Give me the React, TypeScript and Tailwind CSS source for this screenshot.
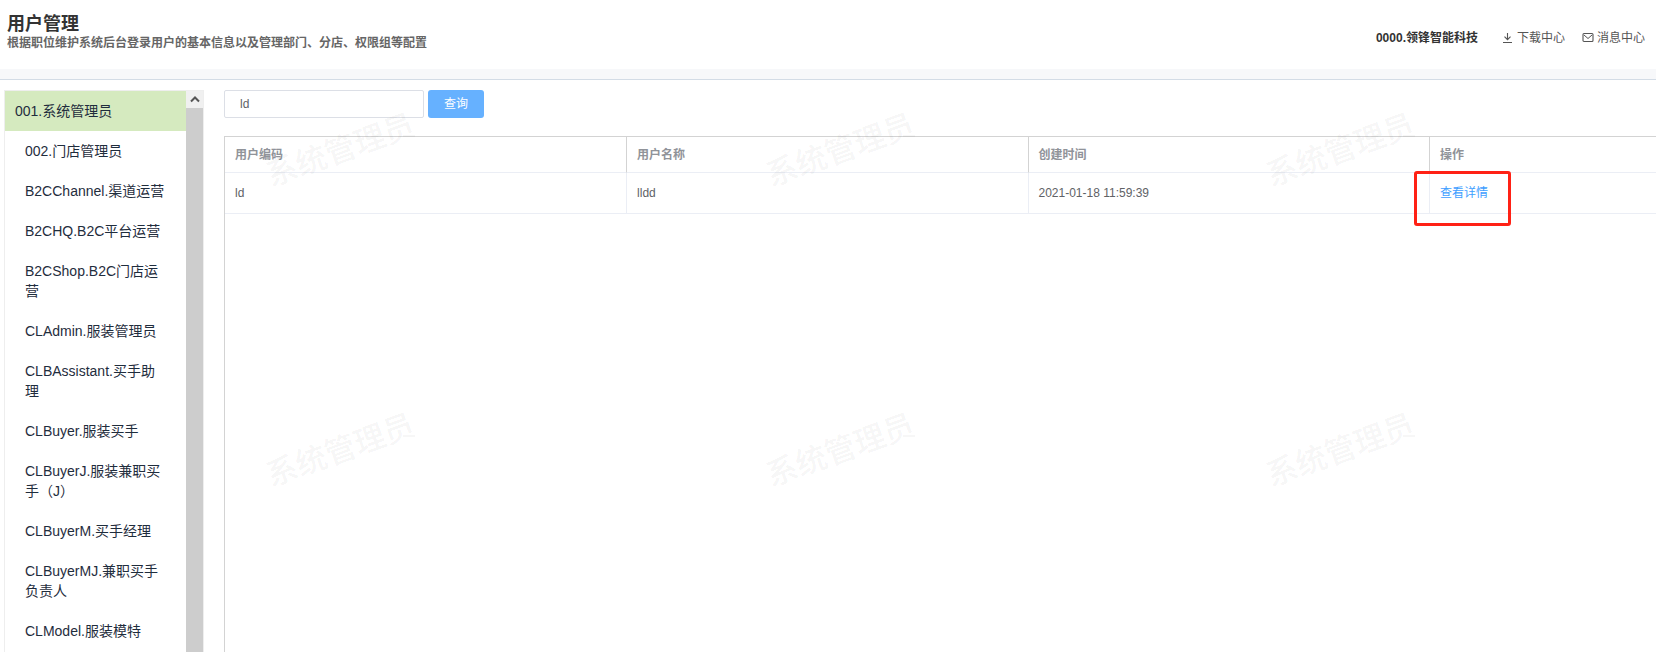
import React from 'react';

type Role = { code: string; name: string };
type User = { code: string; name: string; createdAt: string };

const roles: Role[] = [
  { code: '001', name: '系统管理员' },
  { code: '002', name: '门店管理员' },
  { code: 'B2CChannel', name: '渠道运营' },
  { code: 'B2CHQ', name: 'B2C平台运营' },
  { code: 'B2CShop', name: 'B2C门店运营' },
  { code: 'CLAdmin', name: '服装管理员' },
  { code: 'CLBAssistant', name: '买手助理' },
  { code: 'CLBuyer', name: '服装买手' },
  { code: 'CLBuyerJ', name: '服装兼职买手（J）' },
  { code: 'CLBuyerM', name: '买手经理' },
  { code: 'CLBuyerMJ', name: '兼职买手负责人' },
  { code: 'CLModel', name: '服装模特' },
];

const users: User[] = [{ code: 'ld', name: 'lldd', createdAt: '2021-01-18 11:59:39' }];

function DownloadIcon() {
  return (
    <svg viewBox="0 0 12 12" className="size-3" fill="none" stroke="currentColor" aria-hidden="true">
      <path d="M5.500 1v6.500M2.500 4.700l3 3 3-3M1 10.500h9" strokeWidth="1.100" />
    </svg>
  );
}

function MessageIcon() {
  return (
    <svg viewBox="0 0 12 12" className="size-3" fill="none" stroke="currentColor" aria-hidden="true">
      <rect x="1" y="1.500" width="10" height="8" rx="1" strokeWidth="1.100" />
      <path d="M2 3l4 3.500L10 3" />
    </svg>
  );
}

function Header() {
  return (
    <header className="border-b border-[#d3dce6]">
      <div className="flex items-start justify-between pr-[11px] pl-[7px]">
        <div className="pt-3 pb-[18px]">
          <h1 className="text-[18px] leading-6 font-bold text-[#333333]">用户管理</h1>
          <p className="text-xs leading-[15px] font-bold text-[#666666]">
            根据职位维护系统后台登录用户的基本信息以及管理部门、分店、权限组等配置
          </p>
        </div>
        <nav className="flex items-center pt-7 text-xs leading-5 text-[#555555]">
          <span className="mr-6 font-bold text-[#333333]">0000.领锋智能科技</span>
          <a href="#downloads" className="mr-[17px] flex items-center gap-[3px]">
            <DownloadIcon />
            下载中心
          </a>
          <a href="#messages" className="flex items-center gap-[3px]">
            <MessageIcon />
            消息中心
          </a>
        </nav>
      </div>
      <div className="h-2.5 bg-[#f7f8fa]" />
    </header>
  );
}

function Sidebar() {
  return (
    <aside className="flex w-50 shrink-0 overflow-hidden border border-b-0 border-[#eeeeee]">
      <ul className="min-w-0 flex-1 text-sm leading-5 text-[#1f2d3d]">
        {roles.map((role, i) => (
          <li key={role.code}>
            <button
              type="button"
              className={
                i === 0
                  ? 'block w-full bg-[#d5eabf] py-2.5 pr-5 pl-2.5 text-left'
                  : 'block w-full py-2.5 pr-5 pl-5 text-left'
              }
            >
              {`${role.code}.${role.name}`}
            </button>
          </li>
        ))}
      </ul>
      <div className="flex w-[17px] shrink-0 flex-col bg-[#f0f0f0]">
        <button type="button" aria-label="向上滚动" className="flex h-[17px] items-center justify-center">
          <svg viewBox="0 0 10 7" className="h-[7px] w-2.5" fill="none" stroke="#555555" strokeWidth="2">
            <path d="M1 5.500 5 1.500l4 4" />
          </svg>
        </button>
        <div className="flex-1 bg-[#cdcdcd]" />
      </div>
    </aside>
  );
}

function SearchBar() {
  return (
    <form className="flex gap-1" onSubmit={(e) => e.preventDefault()}>
      <input
        type="text"
        aria-label="用户编码"
        defaultValue="ld"
        className="h-7 w-50 rounded-[2px] border border-[#dcdfe6] bg-white px-[15px] text-xs text-[#606266] outline-none"
      />
      <button type="submit" className="h-7 w-14 rounded-[3px] bg-[#66b1ff] text-xs text-white">
        查询
      </button>
    </form>
  );
}

function UserTable() {
  return (
    <div className="mt-[18px] flex-1 border-t border-l border-[#d3d3d3]">
      <table className="w-full table-fixed border-separate border-spacing-0 text-left text-xs">
        <thead className="text-[#909399]">
          <tr className="h-9">
            <th className="w-[28.1%] border-r border-b border-r-[#d3d3d3] border-b-[#ebeef5] px-2.5">用户编码</th>
            <th className="w-[28.05%] border-r border-b border-r-[#d3d3d3] border-b-[#ebeef5] px-2.5">用户名称</th>
            <th className="w-[28.05%] border-r border-b border-r-[#d3d3d3] border-b-[#ebeef5] px-2.5">创建时间</th>
            <th className="border-b border-[#ebeef5] px-2.5">操作</th>
          </tr>
        </thead>
        <tbody className="text-[#606266]">
          {users.map((user) => (
            <tr key={user.code} className="h-[41px]">
              <td className="border-r border-b border-[#ebeef5] px-2.5">{user.code}</td>
              <td className="border-r border-b border-[#ebeef5] px-2.5">{user.name}</td>
              <td className="border-r border-b border-[#ebeef5] px-2.5">{user.createdAt}</td>
              <td className="relative border-b border-[#ebeef5] px-2.5">
                <a href="#detail" className="text-[#409eff]">
                  查看详情
                </a>
                <span className="pointer-events-none absolute -top-0.5 -left-4 h-[55px] w-[97px] rounded-[3px] border-3 border-[#ff2115]" />
              </td>
            </tr>
          ))}
        </tbody>
      </table>
    </div>
  );
}

function Watermark() {
  return (
    <div
      aria-hidden="true"
      className="pointer-events-none absolute inset-0 grid auto-rows-[300px] grid-cols-[repeat(3,500px)] overflow-hidden pl-[90px] select-none"
    >
      {Array.from({ length: 6 }, (_, i) => (
        <span key={i} className="flex items-center justify-center">
          <span className="-rotate-[20deg] text-[31px] leading-none font-medium whitespace-nowrap text-black/5">
            系统管理员
          </span>
        </span>
      ))}
    </div>
  );
}

export default function App() {
  return (
    <div className="relative flex h-screen flex-col overflow-hidden bg-white font-['Liberation_Sans','Noto_Sans_CJK_SC',sans-serif]">
      <Header />
      <div className="flex min-h-0 flex-1 gap-5 pt-2.5 pl-1">
        <Sidebar />
        <main className="flex min-w-0 flex-1 flex-col">
          <SearchBar />
          <UserTable />
        </main>
      </div>
      <Watermark />
    </div>
  );
}
